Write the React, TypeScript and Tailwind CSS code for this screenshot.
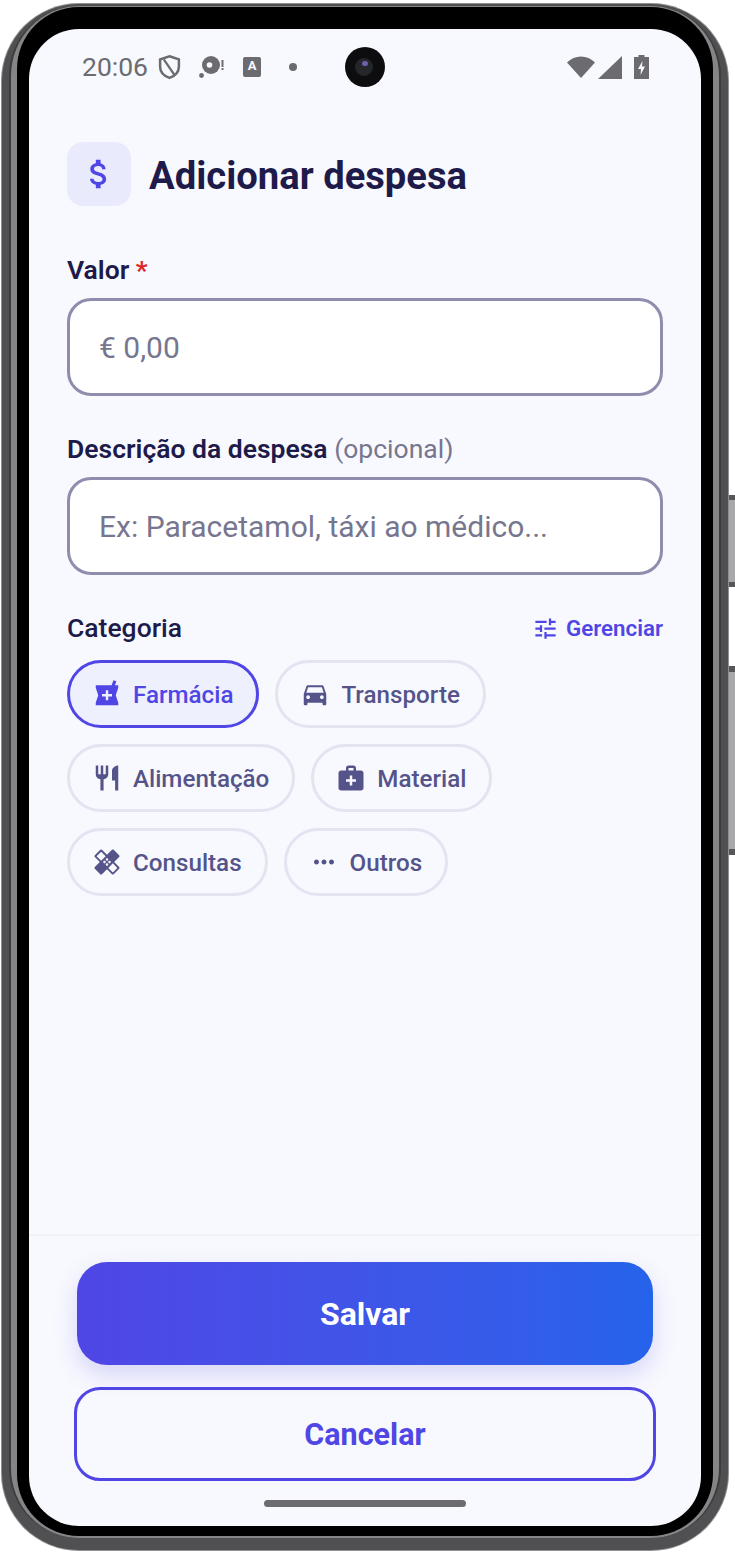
import React from "react";
import {
  MdAttachMoney,
  MdDirectionsCar,
  MdHealing,
  MdLocalPharmacy,
  MdMedicalServices,
  MdMoreHoriz,
  MdRestaurant,
  MdTune,
} from "react-icons/md";
import type { IconType } from "react-icons";

const ROWS: { label: string; icon: IconType; active?: boolean }[][] = [
  [
    { label: "Farmácia", icon: MdLocalPharmacy, active: true },
    { label: "Transporte", icon: MdDirectionsCar },
  ],
  [
    { label: "Alimentação", icon: MdRestaurant },
    { label: "Material", icon: MdMedicalServices },
  ],
  [
    { label: "Consultas", icon: MdHealing },
    { label: "Outros", icon: MdMoreHoriz },
  ],
];

function StatusBar() {
  return (
    <div className="relative flex h-[76px] items-center justify-between pl-[53px] pr-[52px] text-[#6b6b70]">
      <div className="flex items-center">
        <span className="text-[26.5px] leading-none">20:06</span>
        {/* shield */}
        <svg viewBox="0 0 24 26" className="ml-[10px] h-[26px] w-[23px]" fill="none" stroke="#6b6b70" strokeWidth="2.6">
          <path d="M12 1.8 L21.8 5 V12.5 C21.8 18 17.8 22.4 12 24.4 C6.2 22.4 2.2 18 2.2 12.5 V5 Z" />
          <path d="M6 5 L17 21" strokeWidth="2.4" />
        </svg>
        {/* disc notification */}
        <svg viewBox="0 0 26 24" className="ml-[18px] h-[24px] w-[26px]" fill="#6b6b70">
          <circle cx="12" cy="10" r="9" />
          <circle cx="10.5" cy="10" r="2.8" fill="#f8f9fe" />
          <circle cx="2.5" cy="20.5" r="2.4" />
          <rect x="22.5" y="5" width="2" height="7" />
          <rect x="22.5" y="13" width="2" height="2" />
        </svg>
        {/* keyboard A */}
        <div className="ml-[18px] flex h-[20px] w-[18px] items-start justify-center rounded-[2px] bg-[#6b6b70] text-[13px] font-bold leading-[17px] text-[#f8f9fe]">
          A
        </div>
        <div className="ml-[28px] h-[8px] w-[8px] rounded-full bg-[#6b6b70]" />
      </div>
      <div className="absolute left-[316px] top-[18px] h-[40px] w-[40px] rounded-full bg-[#0d0d10]">
        <div className="absolute left-[10px] top-[11px] h-[18px] w-[18px] rounded-full bg-[#23272b]" />
        <div className="absolute left-[17px] top-[14px] h-[5px] w-[6px] rounded-full bg-[#6f5fa8]" />
      </div>
      <div className="flex items-center">
        <svg viewBox="0 0 28 24" className="h-[24px] w-[28px]" fill="#6b6b70">
          <path d="M0 7.5 C7.5 -0.5 20.5 -0.5 28 7.5 L14 23 Z" />
        </svg>
        <svg viewBox="0 0 24 24" className="ml-[3px] h-[24px] w-[24px]" fill="#6b6b70">
          <path d="M24 1 V24 H0 Z" />
        </svg>
        <svg viewBox="0 0 15 24" className="ml-[12px] h-[24px] w-[15px]" fill="#6b6b70">
          <path d="M4.5 0 H10.5 V2 H15 V24 H0 V2 H4.5 Z" />
          <path d="M8.5 6 L4 14 H7 L6.5 20 L11 11.5 H8 Z" fill="#f8f9fe" />
        </svg>
      </div>
    </div>
  );
}

function Field({ placeholder }: { placeholder: string }) {
  return (
    <div className="flex h-[98px] items-center rounded-[24px] border-[3px] border-[#8f8dae] bg-white pl-[29px] text-[30px] text-[#77768f]">
      {placeholder}
    </div>
  );
}

export default function App() {
  return (
    <div className="relative h-[1553px] w-[735px] overflow-hidden bg-white font-['Roboto',sans-serif]">
      {/* side buttons */}
      <div className="absolute left-[729px] top-[495px] h-[92px] w-[6px] border-y-[5px] border-[#56565a] bg-[#a8a8aa]" />
      <div className="absolute left-[729px] top-[666px] h-[189px] w-[6px] border-y-[6px] border-[#56565a] bg-[#a8a8aa]" />

      {/* phone body */}
      <div className="ml-[1px] mt-[3px] h-[1548px] w-[728px] rounded-[78px] bg-[#8f8f91] p-[1px]">
        <div className="h-full w-full rounded-[77px] bg-[#505052] px-[7px] pb-[12px] pt-[2px]">
          <div className="h-full w-full rounded-[70px] border-x-[2px] border-[#3c3c3e] bg-[#858587] px-[6px] pb-[2px] pt-[1px]">
            <div className="h-full w-full rounded-[62px] bg-black px-[12px] pb-[10px] pt-[22px]">
              <div className="flex h-full w-full flex-col overflow-hidden rounded-[50px] bg-[#f8f9fe]">
                <StatusBar />

                <div className="flex flex-1 flex-col px-[38px] pt-[37px]">
                  <div className="flex items-center">
                    <div className="flex h-[64px] w-[64px] items-center justify-center rounded-[16px] bg-[#e9eafc] text-[#4f46e5]">
                      <MdAttachMoney size={38} />
                    </div>
                    <h1 className="ml-[18px] pt-[5px] text-[38.2px] font-bold text-[#1e1b4b]">Adicionar despesa</h1>
                  </div>

                  <div className="mt-[47px] text-[26.5px] font-semibold leading-[34px] text-[#1e1b4b]">
                    Valor <span className="text-[#dc2626]">*</span>
                  </div>
                  <div className="mt-[11px]">
                    <Field placeholder="€ 0,00" />
                  </div>

                  <div className="mt-[36px] text-[26.5px] font-semibold leading-[34px] text-[#1e1b4b]">
                    Descrição da despesa <span className="font-normal text-[#77768f]">(opcional)</span>
                  </div>
                  <div className="mt-[11px]">
                    <Field placeholder="Ex: Paracetamol, táxi ao médico..." />
                  </div>

                  <div className="mt-[36px] flex items-center justify-between">
                    <span className="text-[26.5px] font-medium leading-[34px] text-[#1e1b4b]">Categoria</span>
                    <span className="flex items-center gap-[7px] pt-[1px] text-[22.3px] font-semibold text-[#4f46e5]">
                      <MdTune size={27} />
                      Gerenciar
                    </span>
                  </div>

                  <div className="mt-[15px] flex flex-col gap-[16px]">
                    {ROWS.map((row, i) => (
                      <div key={i} className="flex gap-[16px]">
                        {row.map((c) => {
                          const Icon = c.icon;
                          return (
                            <div
                              key={c.label}
                              className={
                                c.active
                                  ? "flex h-[68px] items-center gap-[11px] rounded-full border-[3px] border-[#4f46e5] bg-[#eef0fd] pl-[22px] pr-[23px] text-[24.2px] font-medium text-[#4f46e5]"
                                  : "flex h-[68px] items-center gap-[11px] rounded-full border-[3px] border-[#e3e3f2] pl-[22px] pr-[23px] text-[24.2px] font-medium text-[#55548a]"
                              }
                            >
                              <Icon size={30} />
                              <span className="pt-[2px]">{c.label}</span>
                            </div>
                          );
                        })}
                      </div>
                    ))}
                  </div>
                </div>

                {/* footer */}
                <div className="flex h-[292px] flex-col items-center border-t-[2px] border-[#f1f2f8]">
                  <button className="mt-[26px] h-[103px] w-[576px] rounded-[30px] bg-gradient-to-r from-[#4f46e5] to-[#2563eb] text-[32px] font-bold text-white shadow-[0_10px_24px_rgba(79,70,229,0.2)]">
                    Salvar
                  </button>
                  <button className="mt-[22px] h-[94px] w-[582px] rounded-[26px] border-[3px] border-[#4f46e5] pt-[2px] text-[30.5px] font-bold text-[#4f46e5]">
                    Cancelar
                  </button>
                  <div className="mt-[19px] h-[7px] w-[202px] rounded-full bg-[#6b6b70]" />
                </div>
              </div>
            </div>
          </div>
        </div>
      </div>
    </div>
  );
}
